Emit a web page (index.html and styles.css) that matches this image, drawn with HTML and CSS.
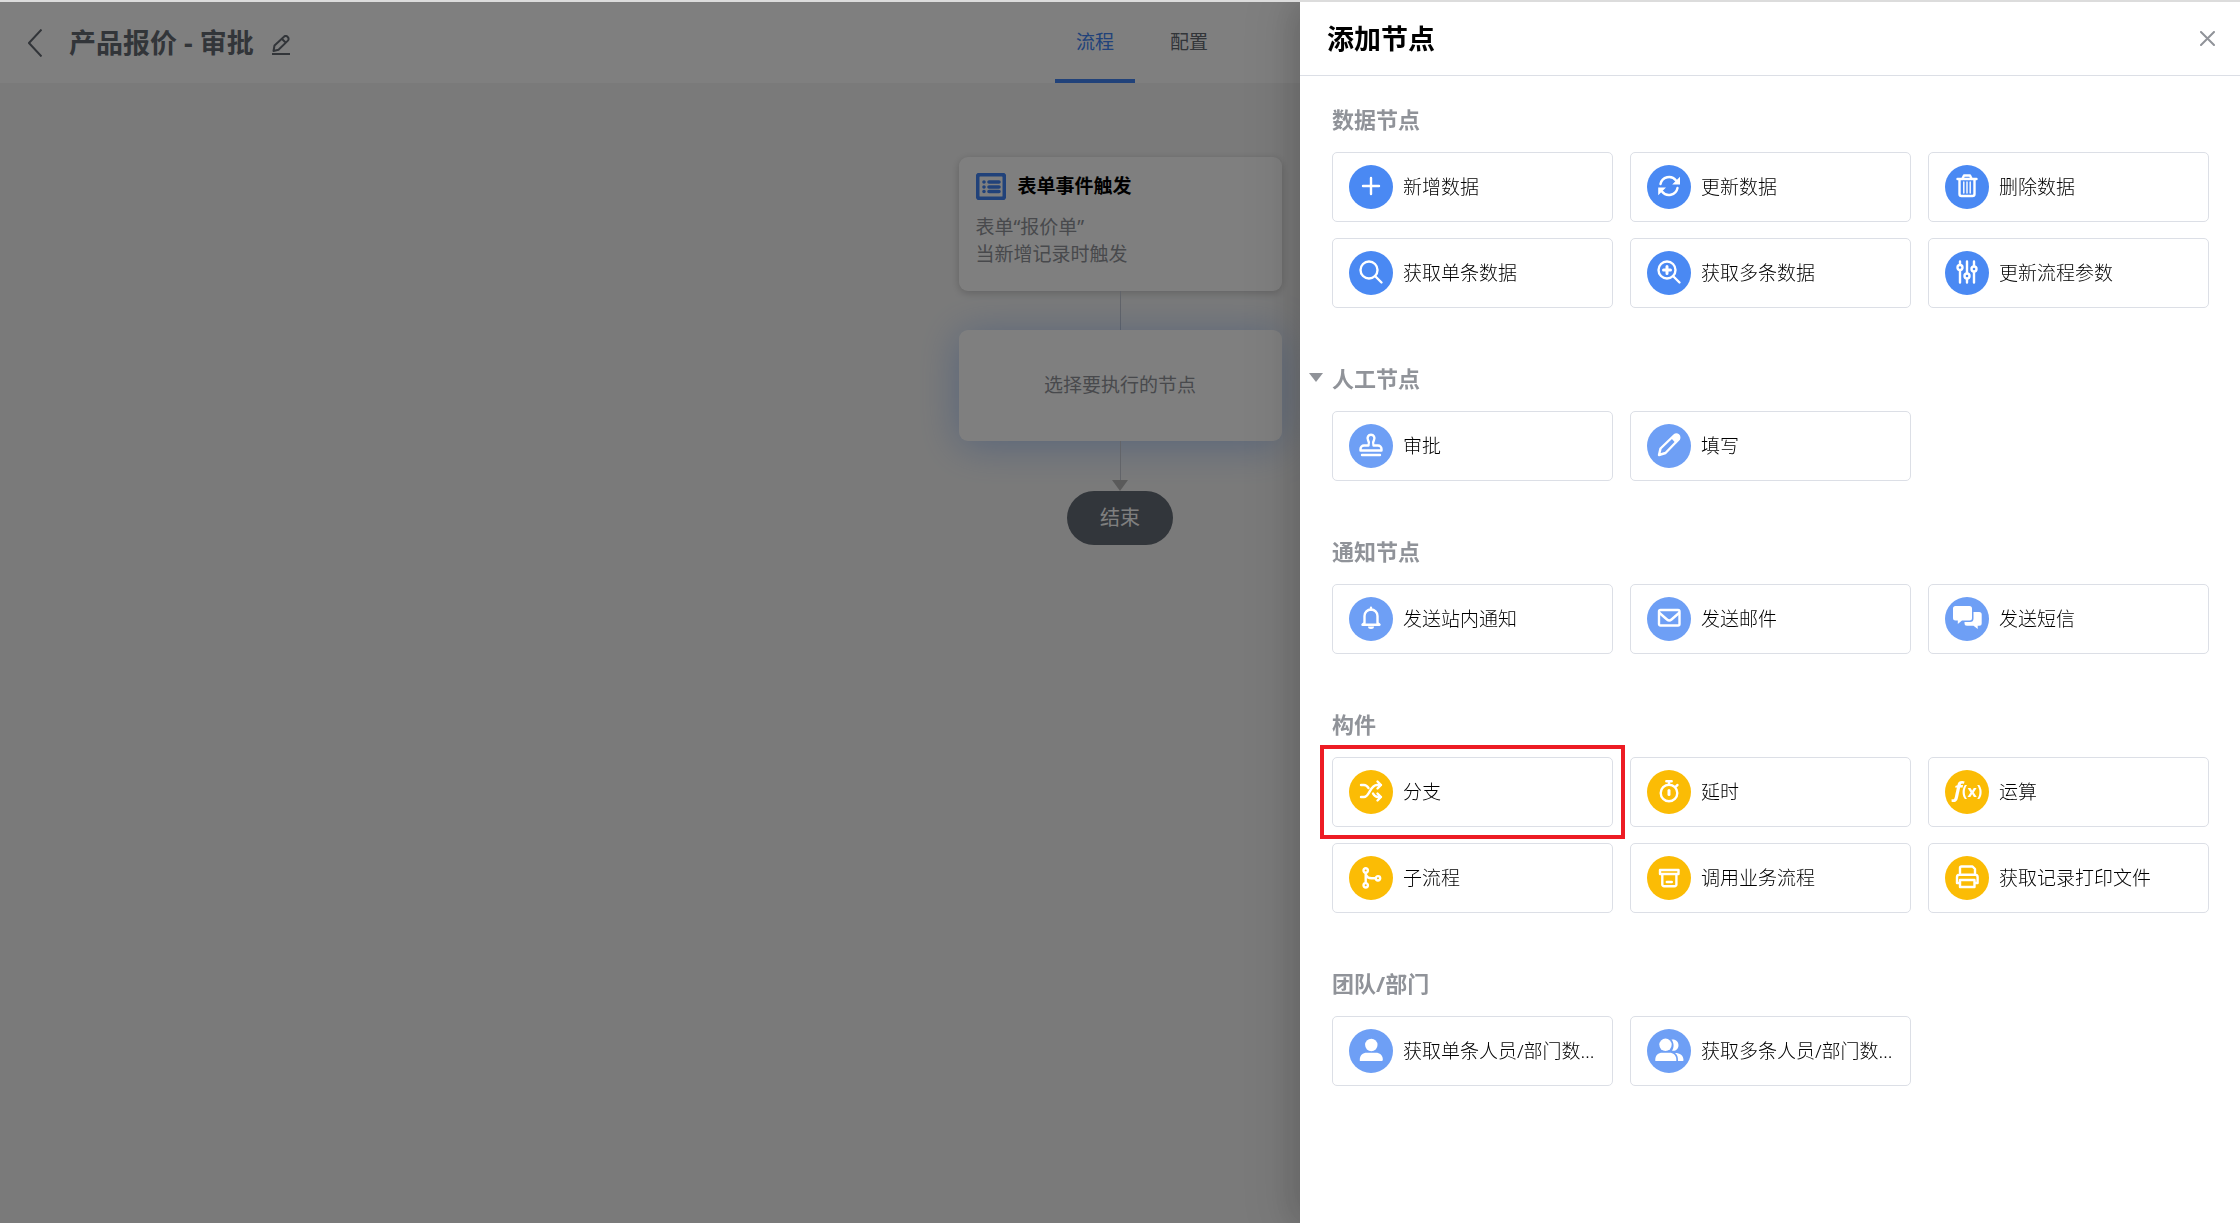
FILE: index.html
```html
<!DOCTYPE html>
<html lang="zh-CN">
<head>
    <meta charset="UTF-8">
    <meta name="viewport" content="width=device-width, initial-scale=1.0">
    <title>产品报价 - 审批</title>
    <link rel="stylesheet" href="styles.css">
</head>
<body>
    <header class="topbar">
        <div class="topbar-left">
            <button class="icon-btn" type="button" aria-label="返回">
                <svg width="14" height="28" viewBox="0 0 14 28" fill="none" stroke="currentColor" stroke-width="2"><path d="M13.5 .5L1 14l12.5 13.5"/></svg>
            </button>
            <h1 class="flow-name">产品报价 - 审批</h1>
            <button class="icon-btn edit-btn" type="button" aria-label="编辑名称">
                <svg width="20" height="20" viewBox="0 0 20 20" fill="none" stroke="currentColor" stroke-width="2" stroke-linejoin="round"><path d="M2.500 16l1-5.500L13 1.700a2.300 2.300 0 0 1 3.400 0l.5.6a2.300 2.300 0 0 1 0 3.300L7.500 14.800zM10.800 3.800l4 4M1 19h18"/></svg>
            </button>
        </div>
        <nav class="tabs">
            <a class="tab active" href="#flow">流程</a>
            <a class="tab" href="#config">配置</a>
        </nav>
    </header>

    <main class="canvas">
        <section class="node">
            <div class="node-head">
                <svg width="30" height="27" viewBox="0 0 30 27"><rect x="1.500" y="1.500" width="27" height="24" rx="2.500" fill="none" stroke="#4285f4" stroke-width="4"/><path d="M8 9h0M8 14h0M8 18.500h0M13 9h10M13 14h10M13 18.500h10" stroke="#4285f4" stroke-width="3.600" stroke-linecap="round"/></svg>
                <h2>表单事件触发</h2>
            </div>
            <p>表单“报价单”</p>
            <p>当新增记录时触发</p>
        </section>
        <div class="line"></div>
        <section class="node node-empty">选择要执行的节点</section>
        <div class="line"></div>
        <div class="arrow"></div>
        <div class="node-end">结束</div>
    </main>

    <div class="mask"></div>

    <aside class="drawer">
        <header class="drawer-header">
            <h2>添加节点</h2>
            <button class="icon-btn" type="button" aria-label="关闭">
                <svg width="15" height="15" viewBox="0 0 15 15" stroke="currentColor" stroke-width="2" stroke-linecap="round"><path d="M1 1l13 13M14 1L1 14"/></svg>
            </button>
        </header>

        <div class="drawer-body">
            <section class="group">
                <h3>数据节点</h3>
                <div class="cards">
                    <button class="card" type="button">
                        <span class="icon blue"><svg viewBox="0 0 24 24"><path d="M12 3v16M4 11h16"/></svg></span>
                        <span class="label">新增数据</span>
                    </button>
                    <button class="card" type="button">
                        <span class="icon blue"><svg viewBox="0 0 24 24"><path d="M3.500 9a8.700 8.700 0 0 1 15.500-3.500M20.500 13a8.700 8.700 0 0 1-15.500 3.500"/><path class="solid" d="M23 1.700v7.800h-7.800zM1.200 20.300v-7.800H9z"/></svg></span>
                        <span class="label">更新数据</span>
                    </button>
                    <button class="card" type="button">
                        <span class="icon blue"><svg viewBox="0 0 24 24"><path d="M2.500 4h19M7.500 3.500L9 .5h6l1.500 3M4.500 4.500v14.500a2 2 0 0 0 2 2h11a2 2 0 0 0 2-2V4.500"/><path class="thin" d="M8.800 7v11M12 7v11M15.200 7v11"/></svg></span>
                        <span class="label">删除数据</span>
                    </button>
                    <button class="card" type="button">
                        <span class="icon blue"><svg viewBox="0 0 24 24"><circle cx="10" cy="9" r="8.500"/><path d="M16 15l6.500 6.500"/></svg></span>
                        <span class="label">获取单条数据</span>
                    </button>
                    <button class="card" type="button">
                        <span class="icon blue"><svg viewBox="0 0 24 24"><circle cx="10" cy="9" r="8.500"/><path d="M16 15l6.500 6.500"/><path class="bold" d="M10 5.500v7M6.500 9h7"/></svg></span>
                        <span class="label">获取多条数据</span>
                    </button>
                    <button class="card" type="button">
                        <span class="icon blue"><svg viewBox="0 0 24 24"><circle cx="5" cy="6.500" r="2.500"/><circle cx="12" cy="15" r="2.500"/><circle cx="19" cy="8" r="2.500"/><path d="M5 .5v3M5 9.500v12M12 .5v11.500M12 18v3.500M19 .5V5M19 11v10.500"/></svg></span>
                        <span class="label">更新流程参数</span>
                    </button>
                </div>
            </section>

            <section class="group">
                <h3 class="collapsible">人工节点</h3>
                <div class="cards">
                    <button class="card" type="button">
                        <span class="icon light"><svg viewBox="0 0 24 24"><path d="M9.500 11.500c1-2.500.5-4-.5-5.500-1.200-2.500.3-5.200 3-5.200s4.200 2.700 3 5.200c-1 1.500-1.500 3-.5 5.500H19a3.500 3.500 0 0 1 3.500 3.500v1.500h-21V15A3.500 3.500 0 0 1 5 11.500zM3 21h18"/></svg></span>
                        <span class="label">审批</span>
                    </button>
                    <button class="card" type="button">
                        <span class="icon light"><svg viewBox="0 0 24 24"><path d="M2 21l1.500-6.500L17 1.500a2.800 2.800 0 0 1 4.500 4L8.500 19z"/><path class="solid" d="M14 4l3-3c3.500-2 7.500 1.500 5.500 5l-3.500 3.500z"/></svg></span>
                        <span class="label">填写</span>
                    </button>
                </div>
            </section>

            <section class="group">
                <h3>通知节点</h3>
                <div class="cards">
                    <button class="card" type="button">
                        <span class="icon light"><svg viewBox="0 0 24 24"><path d="M12 .8v2M5.500 16V9a6.500 6.500 0 0 1 13 0v7l2 1.700h-17z"/><path class="solid" d="M9 19.500h6a3 2.500 0 0 1-6 0z"/></svg></span>
                        <span class="label">发送站内通知</span>
                    </button>
                    <button class="card" type="button">
                        <span class="icon light"><svg viewBox="0 0 24 24"><rect x="2" y="3" width="20.500" height="15.500" rx="1.500"/><path d="M2.500 6l7.500 6.500c1.500 1.300 3 1.300 4.500 0L22 6"/></svg></span>
                        <span class="label">发送邮件</span>
                    </button>
                    <button class="card" type="button">
                        <span class="icon light"><svg viewBox="0 0 24 24"><path class="solid" d="M.5-1h14A2.500 2.500 0 0 1 17 1.500V11a2.500 2.500 0 0 1-2.500 2.500H7L2.800 17v-3.500H.5A2.500 2.500 0 0 1-2 11V1.500A2.500 2.500 0 0 1 .5-1z"/><path class="solid" d="M18.500 5h5.700a2.500 2.500 0 0 1 2.500 2.500v8.700a2.500 2.500 0 0 1-2.500 2.500h-1.500V22l-4.200-3.300H12a2.500 2.500 0 0 1-2.500-2.500V15H15a3.500 3.500 0 0 0 3.500-3.500z"/></svg></span>
                        <span class="label">发送短信</span>
                    </button>
                </div>
            </section>

            <section class="group">
                <h3>构件</h3>
                <div class="cards">
                    <button class="card marked" type="button">
                        <span class="icon yellow"><svg viewBox="0 0 24 24"><path d="M2 5h3c2.500 0 3.500 1.500 4.500 3M2 17h3c5.500 0 6-12 13-12h4M14 13.500c1 2 2.500 3.500 5 3.500h3M18.500 1.500L22 5l-3.500 3.500M18.500 13.500L22 17l-3.500 3.500"/></svg></span>
                        <span class="label">分支</span>
                    </button>
                    <button class="card" type="button">
                        <span class="icon yellow"><svg viewBox="0 0 24 24"><circle cx="12" cy="13" r="8.300"/><path d="M9.300 1.200h5.400M12 1.500v3M18.500 6.800l2-1.800"/><path class="bold" d="M12 10.500v4"/></svg></span>
                        <span class="label">延时</span>
                    </button>
                    <button class="card" type="button">
                        <span class="icon yellow"><svg viewBox="0 0 24 24"><text class="fn" x="-1" y="17">f</text><text class="fn-arg" x="7" y="17">(x)</text></svg></span>
                        <span class="label">运算</span>
                    </button>
                    <button class="card" type="button">
                        <span class="icon yellow"><svg viewBox="0 0 24 24"><circle cx="6.700" cy="4.500" r="2.200"/><circle cx="6.700" cy="19.300" r="2.200"/><circle cx="19" cy="12.300" r="2.200"/><path d="M6.700 7v9.500M7 9c1 2.500 3 3.300 5.500 3.300h3.800"/></svg></span>
                        <span class="label">子流程</span>
                    </button>
                    <button class="card" type="button">
                        <span class="icon yellow"><svg viewBox="0 0 24 24"><rect x="3" y="4" width="18.500" height="4"/><path d="M5.300 8.500v10a1.800 1.800 0 0 0 1.800 1.800h10.500a1.800 1.800 0 0 0 1.800-1.800v-10M9.800 16h5"/></svg></span>
                        <span class="label">调用业务流程</span>
                    </button>
                    <button class="card" type="button">
                        <span class="icon yellow"><svg viewBox="0 0 24 24"><path d="M5 7V2a1.500 1.500 0 0 1 1.500-1.500h11L20 3v4M5 17H2V11a2.300 2.300 0 0 1 2.300-2.300h16A2.300 2.300 0 0 1 22.600 11v6H20"/><rect x="5" y="14" width="14.500" height="7"/></svg></span>
                        <span class="label">获取记录打印文件</span>
                    </button>
                </div>
            </section>

            <section class="group">
                <h3>团队/部门</h3>
                <div class="cards">
                    <button class="card" type="button">
                        <span class="icon light"><svg viewBox="0 0 24 24"><circle class="solid" cx="12.300" cy="6" r="6.200"/><path class="solid" d="M.8 22v-1.500c0-4 3-6.700 7-6.700h9c4 0 7 2.700 7 6.700 0 1-.5 1.500-1.500 1.500z"/></svg></span>
                        <span class="label">获取单条人员/部门数据</span>
                    </button>
                    <button class="card" type="button">
                        <span class="icon light"><svg viewBox="0 0 24 24"><path class="solid" d="M14.500.5c4.500-.5 7 2.300 7 5.700 0 3.800-3 6.300-6.500 5.500 2.200-3 2.200-8-.5-11.200zM18 14c5 0 8.500 2.500 8.500 7 0 .7-.3 1-1 1H21c0-4-.5-6-3-8z"/><circle class="solid" cx="8.500" cy="5.800" r="6.200"/><path class="solid" d="M-1.700 22v-1.500c0-4 3-6.700 7-6.700h7c4 0 7 2.700 7 6.700V22z"/></svg></span>
                        <span class="label">获取多条人员/部门数据</span>
                    </button>
                </div>
            </section>
        </div>
    </aside>
</body>
</html>
```
FILE: styles.css
```css
* {
    box-sizing: border-box;
}

body {
    font-family: "Noto Sans", "Noto Sans CJK SC", sans-serif;
    font-size: 19px;
    line-height: 27px;
    color: #000;
    background-color: #f5f5f5;
    margin: 0;
    min-height: 100vh;
    border-top: 2px solid #dcdcdc;
}

h1, h2, h3, p {
    margin: 0;
}

button {
    font: inherit;
    color: inherit;
    cursor: pointer;
}

.icon-btn {
    display: flex;
    padding: 0;
    border: none;
    background: none;
}

/* Top bar */
.topbar {
    display: grid;
    grid-template-columns: 1fr auto 1fr;
    height: 81px;
    background-color: #fff;
    color: #646a73;
}

.topbar-left {
    display: flex;
    align-items: center;
    padding-left: 28px;
}

.flow-name {
    font-size: 27px;
    margin: 0 17px 0 27px;
}

.edit-btn {
    padding-top: 5px;
}

.tabs {
    display: flex;
    gap: 14px;
    margin-left: 44px;
}

.tab {
    padding: 27px 21px 0;
    color: #646a73;
    text-decoration: none;
    border-bottom: 4px solid transparent;
}

.tab.active {
    color: #4285f4;
    border-color: #4285f4;
}

/* Flow canvas */
.canvas {
    display: flex;
    flex-direction: column;
    align-items: center;
    padding-top: 74px;
}

.node {
    width: 323px;
    min-height: 134px;
    padding: 16px 17px;
    background-color: #fff;
    border-radius: 9px;
    box-shadow: 0 2px 8px rgba(0, 0, 0, 0.2);
    color: #909399;
}

.node-head {
    display: flex;
    align-items: center;
    gap: 12px;
    margin-bottom: 14px;
    color: #000;
}

.node-head h2 {
    font-size: 19px;
}

.node-empty {
    display: flex;
    align-items: center;
    justify-content: center;
    min-height: 111px;
    box-shadow: 0 4px 40px rgba(66, 133, 244, 0.4);
}

.line {
    width: 1px;
    height: 39px;
    background-color: #c4c8d2;
}

.arrow {
    border: 8px solid transparent;
    border-top: 11px solid #b5b5b5;
    border-bottom: 0;
}

.node-end {
    padding: 13px 33px 14px;
    border-radius: 27px;
    background-color: #646c76;
    color: #fff;
    font-size: 20px;
}

/* Drawer */
.mask {
    position: fixed;
    inset: 2px 0 0;
    background-color: rgba(0, 0, 0, 0.5);
}

.drawer {
    position: fixed;
    inset: 2px 0 0 auto;
    width: 42%;
    max-width: 940px;
    background-color: #fff;
    box-shadow: -6px 0 30px rgba(0, 0, 0, 0.15), -12px 0 48px 16px rgba(0, 0, 0, 0.06);
    clip-path: inset(0 0 0 -120px);
}

.drawer-header {
    display: flex;
    align-items: center;
    justify-content: space-between;
    height: 74px;
    padding: 0 25px 0 27px;
    border-bottom: 1px solid #dcdfe6;
}

.drawer-header h2 {
    font-size: 27px;
}

.drawer-header .icon-btn {
    color: #909399;
}

.drawer-body {
    display: flex;
    flex-direction: column;
    gap: 55px;
    padding: 28px 31px 28px 32px;
}

.group h3 {
    margin-bottom: 18px;
    font-size: 22px;
    line-height: 30px;
    color: #909399;
}

.collapsible {
    position: relative;
}

.collapsible::before {
    content: "";
    position: absolute;
    left: -23px;
    top: 10px;
    border: 7px solid transparent;
    border-top: 9px solid #909399;
    border-bottom: 0;
}

.cards {
    display: grid;
    grid-template-columns: repeat(3, 1fr);
    gap: 16px 17px;
}

.card {
    display: flex;
    align-items: center;
    gap: 10px;
    min-width: 0;
    height: 70px;
    padding: 0 14px 0 16px;
    border: 1px solid #dcdfe6;
    border-radius: 5px;
    background-color: #fff;
}

.label {
    overflow: hidden;
    white-space: nowrap;
    text-overflow: ellipsis;
    font-weight: 300;
}

/* Red frame round the highlighted card */
.marked {
    position: relative;
}

.marked::after {
    content: "";
    position: absolute;
    inset: -13px;
    border: 4px solid #ed1c24;
}

/* Round icons */
.icon {
    display: flex;
    flex: none;
    align-items: center;
    justify-content: center;
    width: 44px;
    height: 44px;
    border-radius: 50%;
}

.blue {
    background-color: #4a89f3;
}

.light {
    background-color: #6e9ff5;
}

.yellow {
    background-color: #fbbc05;
}

.icon svg {
    width: 24px;
    height: 24px;
    overflow: visible;
    fill: none;
    stroke: #fff;
    stroke-width: 2.4;
    stroke-linecap: round;
    stroke-linejoin: round;
}

.icon .solid {
    fill: #fff;
    stroke: none;
}

.icon .thin {
    stroke-width: 1.4;
}

.icon .bold {
    stroke-width: 3;
}

.icon text {
    font-family: "Open Sans", sans-serif;
    font-weight: 700;
    fill: #fff;
    stroke: none;
}

.icon .fn {
    font-size: 22px;
    font-style: italic;
}

.icon .fn-arg {
    font-size: 16px;
}
```
